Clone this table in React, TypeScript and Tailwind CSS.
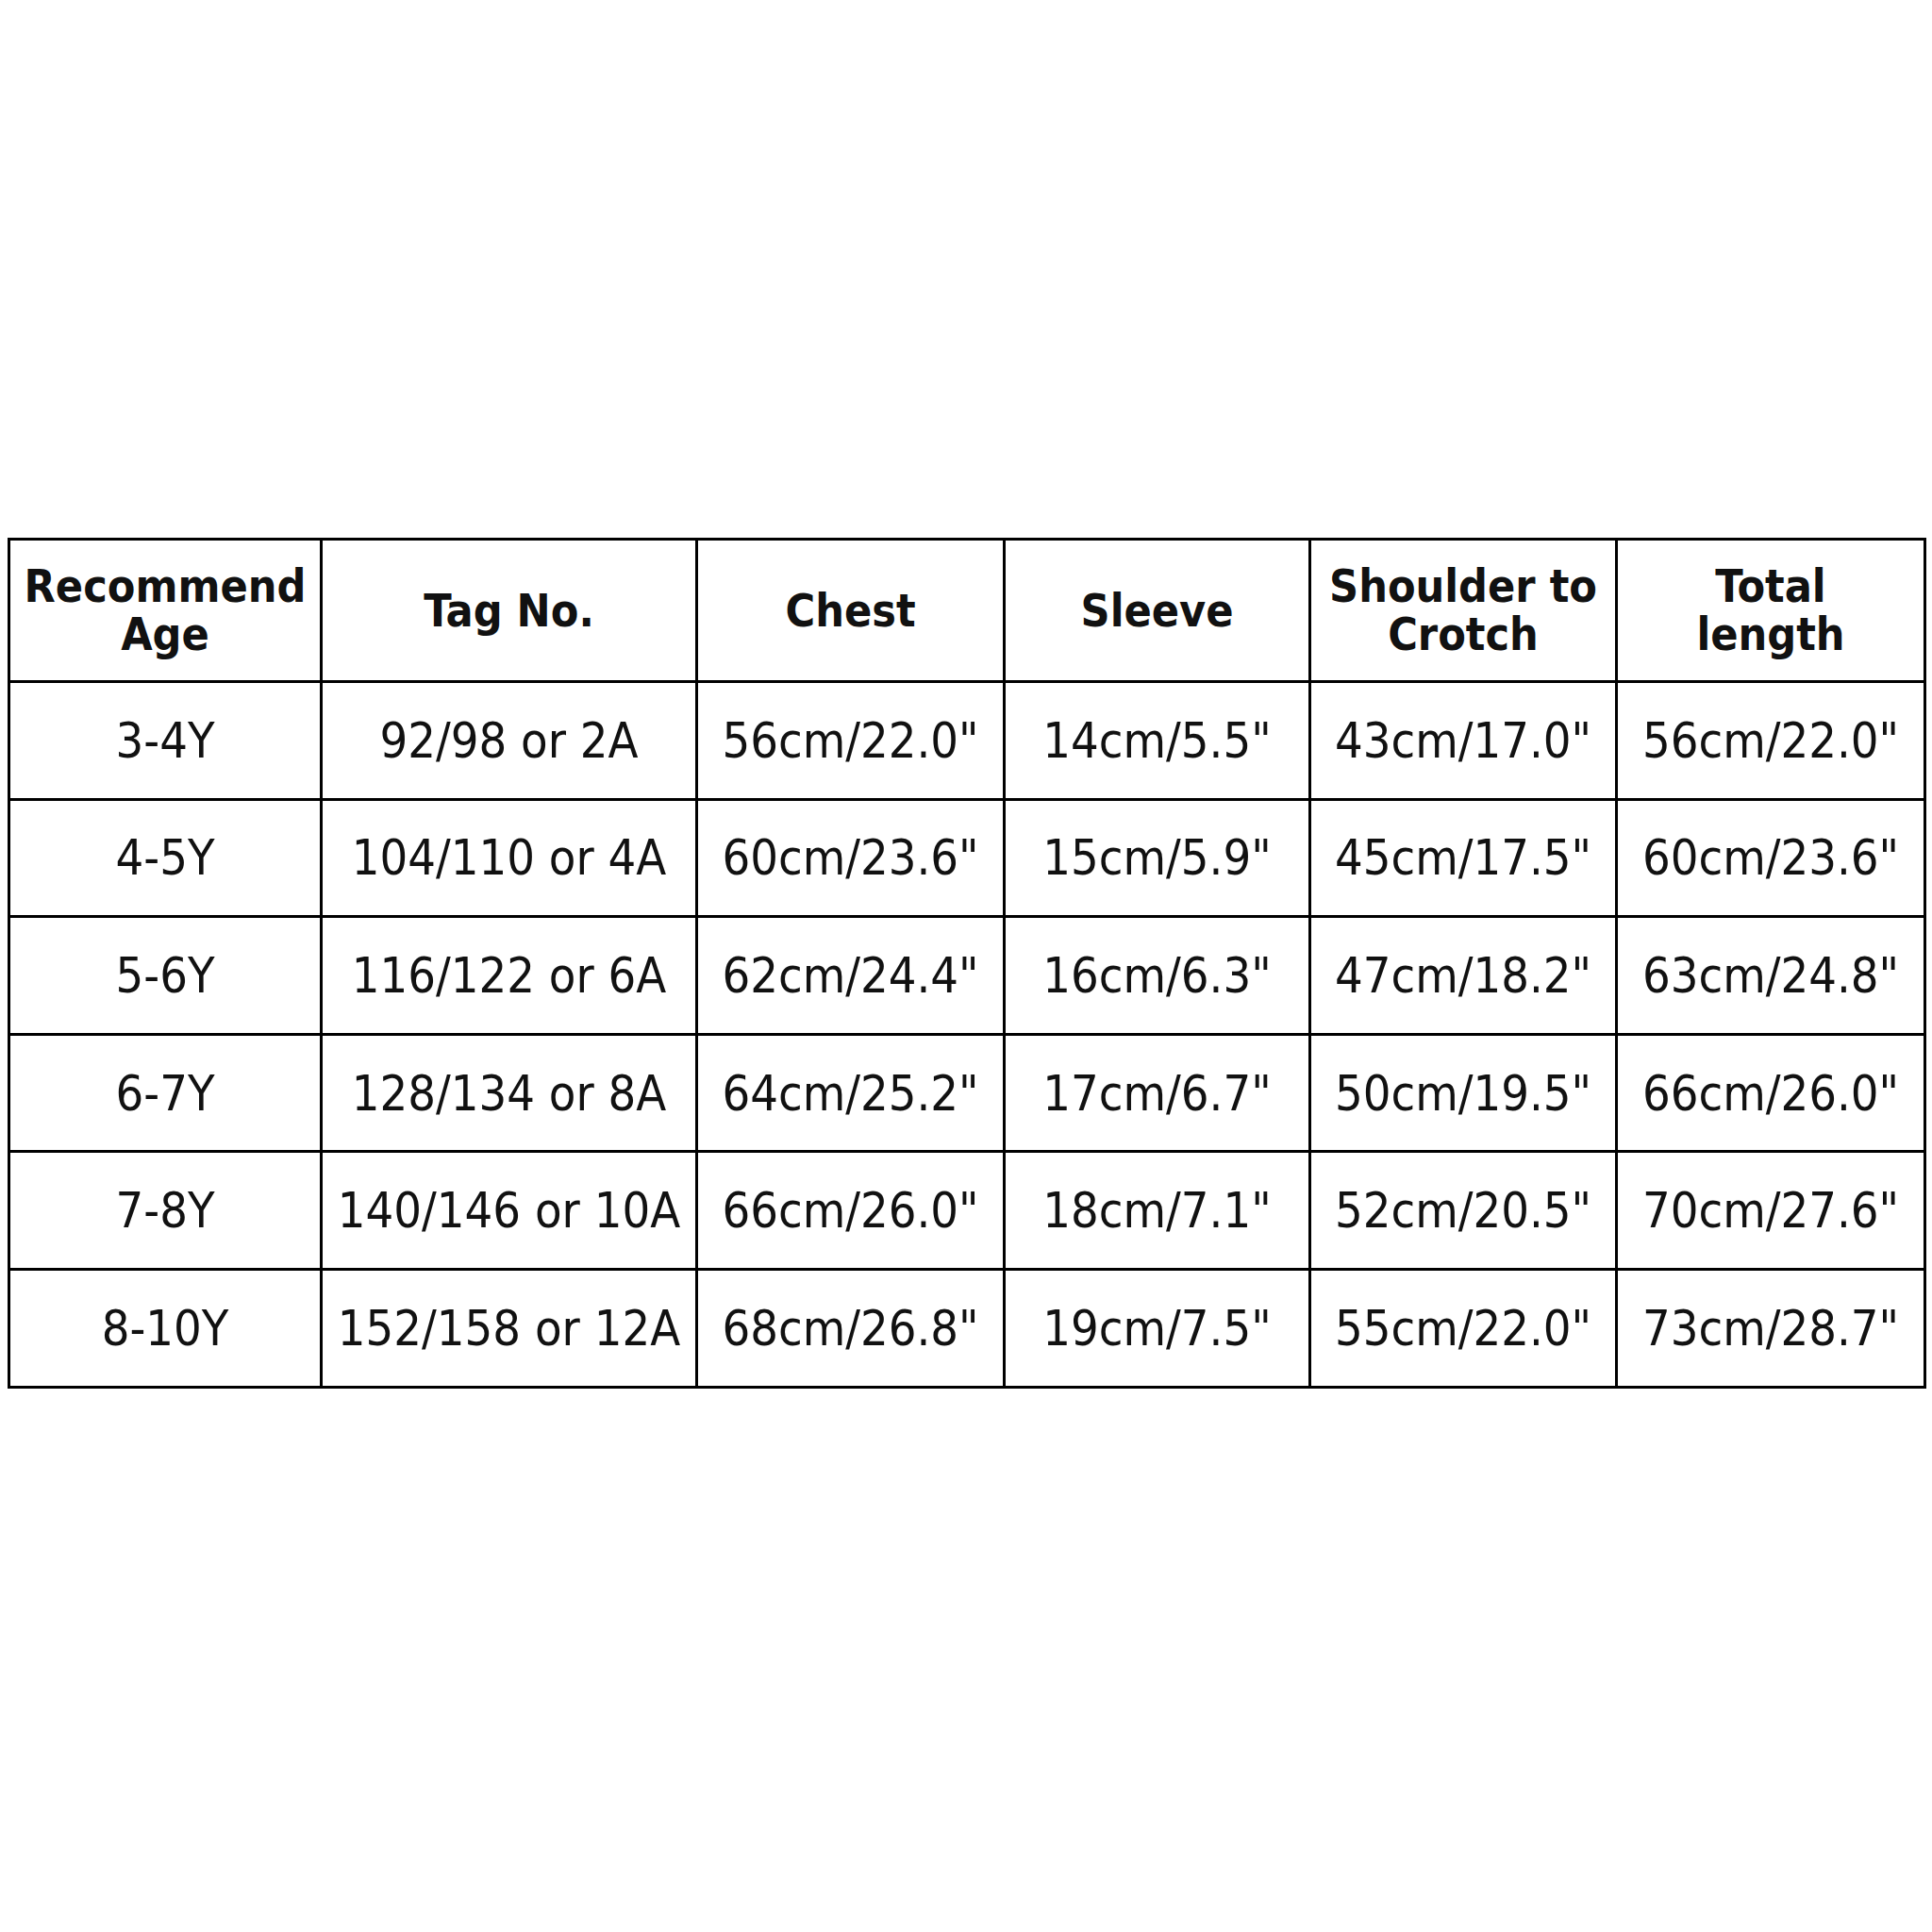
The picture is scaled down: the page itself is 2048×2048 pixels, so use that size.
const headers = [
  ["Recommend", "Age"],
  ["Tag No."],
  ["Chest"],
  ["Sleeve"],
  ["Shoulder to", "Crotch"],
  ["Total", "length"],
];

const rows = [
  ["3-4Y", "92/98 or 2A", '56cm/22.0"', '14cm/5.5"', '43cm/17.0"', '56cm/22.0"'],
  ["4-5Y", "104/110 or 4A", '60cm/23.6"', '15cm/5.9"', '45cm/17.5"', '60cm/23.6"'],
  ["5-6Y", "116/122 or 6A", '62cm/24.4"', '16cm/6.3"', '47cm/18.2"', '63cm/24.8"'],
  ["6-7Y", "128/134 or 8A", '64cm/25.2"', '17cm/6.7"', '50cm/19.5"', '66cm/26.0"'],
  ["7-8Y", "140/146 or 10A", '66cm/26.0"', '18cm/7.1"', '52cm/20.5"', '70cm/27.6"'],
  ["8-10Y", "152/158 or 12A", '68cm/26.8"', '19cm/7.5"', '55cm/22.0"', '73cm/28.7"'],
];

export default function App() {
  return (
    <div className="w-[2048px] h-[2048px] bg-white pt-[570px] pl-[8px] font-['DejaVu_Sans_Condensed','DejaVu_Sans',sans-serif] text-[#111]">
      <table className="table-fixed border-collapse border-[3px] border-black w-[2031px]">
        <colgroup>
          <col className="w-[331px]" />
          <col className="w-[398px]" />
          <col className="w-[326px]" />
          <col className="w-[324px]" />
          <col className="w-[325px]" />
          <col className="w-[327px]" />
        </colgroup>
        <thead>
          <tr className="h-[151px]">
            {headers.map((h, i) => (
              <th key={i} className="border-[3px] border-black text-center align-middle font-bold text-[48px] leading-[51px] px-0">
                {h.map((line, j) => (
                  <div key={j}>{line}</div>
                ))}
              </th>
            ))}
          </tr>
        </thead>
        <tbody>
          {rows.map((r, i) => (
            <tr key={i} className="h-[124.6px]">
              {r.map((c, j) => (
                <td key={j} className="border-[3px] border-black text-center align-middle text-[52px] leading-none whitespace-nowrap px-0">
                  {c}
                </td>
              ))}
            </tr>
          ))}
        </tbody>
      </table>
    </div>
  );
}
